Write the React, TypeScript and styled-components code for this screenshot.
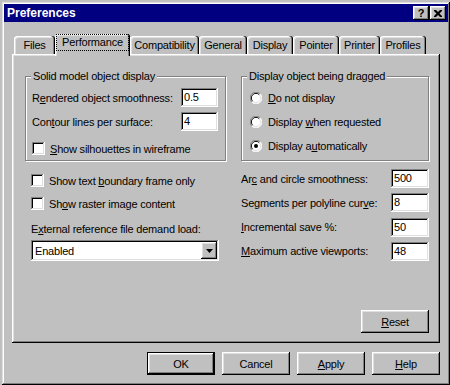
import styled, { createGlobalStyle } from 'styled-components'

const GlobalStyle = createGlobalStyle`
  html, body {
    margin: 0;
    padding: 0;
    background: #c0c0c0;
  }
  body {
    font-family: "Liberation Sans", Arial, sans-serif;
    font-size: 11px;
    letter-spacing: -0.2px;
    color: #000;
  }
  #root {
    padding: 2px 0 0 2px;
  }
`

const raised = `
  box-shadow: inset -1px -1px #000, inset 1px 1px #fff, inset -2px -2px #808080, inset 2px 2px #dfdfdf;
`
const sunken = `
  box-shadow: inset -1px -1px #fff, inset 1px 1px #808080, inset -2px -2px #dfdfdf, inset 2px 2px #000;
`

const tabs = [
  { label: 'Files', width: 41 },
  { label: 'Performance', width: 75, active: true },
  { label: 'Compatibility', width: 69 },
  { label: 'General', width: 48 },
  { label: 'Display', width: 46 },
  { label: 'Pointer', width: 46 },
  { label: 'Printer', width: 41 },
  { label: 'Profiles', width: 46 }
]

function Radio({ checked }: { checked?: boolean }) {
  return (
    <svg width='12' height='12' viewBox='0 0 12 12'>
      <circle cx='6' cy='6' r='5.5' fill='#fff' />
      <path d='M10.2 1.8 A5.9 5.9 0 0 0 1.8 10.2' stroke='#808080' fill='none' />
      <path d='M1.8 10.2 A5.9 5.9 0 0 0 10.2 1.8' stroke='#fff' fill='none' />
      <path d='M9.3 2.7 A4.6 4.6 0 0 0 2.7 9.3' stroke='#000' fill='none' />
      <path d='M2.7 9.3 A4.6 4.6 0 0 0 9.3 2.7' stroke='#dfdfdf' fill='none' />
      {checked && <circle cx='6' cy='6' r='2' fill='#000' />}
    </svg>
  )
}

function App() {
  return (
    <>
      <GlobalStyle />
      <Window>
        <TitleBar>
          <Title>Preferences</Title>
          <TitleButton style={{ marginRight: 1 }}>?</TitleButton>
          <TitleButton>
            <svg width='8' height='7' viewBox='0 0 8 7'>
              <path d='M0 0h2l2 2 2-2h2v1l-2.5 2.5L8 6v1H6L4 5 2 7H0V6l2.5-2.5L0 1z' fill='#000' />
            </svg>
          </TitleButton>
        </TitleBar>

        <Body>
          <TabRow>
            {tabs.map(t => (
              <Tab key={t.label} $w={t.width} $active={t.active}>
                {t.active ? <Focus>{t.label}</Focus> : t.label}
              </Tab>
            ))}
          </TabRow>

          <Panel>
            <TopGrid>
              <Group>
                <Legend>Solid model object display</Legend>
                <GroupInner $pad='5px 7px 4px 6px'>
                  <FieldRow>
                    <span>
                      R<Key>e</Key>ndered object smoothness:
                    </span>
                    <TextBox $w={37}>0.5</TextBox>
                  </FieldRow>
                  <FieldRow>
                    <span>
                      Con<Key>t</Key>our lines per surface:
                    </span>
                    <TextBox $w={37}>4</TextBox>
                  </FieldRow>
                  <CheckRow $mt={6}>
                    <CheckBox />
                    <span>
                      <Key>S</Key>how silhouettes in wireframe
                    </span>
                  </CheckRow>
                </GroupInner>
              </Group>

              <Group>
                <Legend>Display object being dragged</Legend>
                <GroupInner $pad='7px 8px 3px 8px'>
                  <RadioRow>
                    <Radio />
                    <span>
                      <Key>D</Key>o not display
                    </span>
                  </RadioRow>
                  <RadioRow>
                    <Radio />
                    <span>
                      Display <Key>w</Key>hen requested
                    </span>
                  </RadioRow>
                  <RadioRow>
                    <Radio checked />
                    <span>
                      Display a<Key>u</Key>tomatically
                    </span>
                  </RadioRow>
                </GroupInner>
              </Group>
            </TopGrid>

            <LowerGrid>
              <LeftColumn>
                <CheckRow>
                  <CheckBox />
                  <span>
                    Show text <Key>b</Key>oundary frame only
                  </span>
                </CheckRow>
                <CheckRow $mt={10}>
                  <CheckBox />
                  <span>
                    Sh<Key>o</Key>w raster image content
                  </span>
                </CheckRow>
                <Caption>
                  E<Key>x</Key>ternal reference file demand load:
                </Caption>
                <Combo>
                  <span>Enabled</span>
                  <ComboButton>
                    <svg width='7' height='4' viewBox='0 0 7 4'>
                      <path d='M0 0h7L3.5 4z' fill='#000' />
                    </svg>
                  </ComboButton>
                </Combo>
              </LeftColumn>

              <RightColumn>
                <FieldRow>
                  <span>
                    Ar<Key>c</Key> and circle smoothness:
                  </span>
                  <TextBox $w={38}>500</TextBox>
                </FieldRow>
                <FieldRow>
                  <span>
                    Segments per polyline cur<Key>v</Key>e:
                  </span>
                  <TextBox $w={38}>8</TextBox>
                </FieldRow>
                <FieldRow>
                  <span>
                    <Key>I</Key>ncremental save %:
                  </span>
                  <TextBox $w={38}>50</TextBox>
                </FieldRow>
                <FieldRow>
                  <span>
                    <Key>M</Key>aximum active viewports:
                  </span>
                  <TextBox $w={38}>48</TextBox>
                </FieldRow>
              </RightColumn>
            </LowerGrid>

            <ResetRow>
              <Button>
                <Key>R</Key>eset
              </Button>
            </ResetRow>
          </Panel>

          <ButtonRow>
            <Button $default>OK</Button>
            <Button>Cancel</Button>
            <Button>
              <Key>A</Key>pply
            </Button>
            <Button>
              <Key>H</Key>elp
            </Button>
          </ButtonRow>
        </Body>
      </Window>
    </>
  )
}

const Window = styled.div`
  width: 448px;
  height: 383px;
  box-sizing: border-box;
  padding: 2px;
  display: flex;
  flex-direction: column;
  background: #c0c0c0;
  box-shadow: inset -1px -1px #000, inset 1px 1px #dfdfdf, inset -2px -2px #808080, inset 2px 2px #fff;
`

const TitleBar = styled.div`
  height: 18px;
  display: flex;
  align-items: center;
  padding: 0 2px 0 3px;
  background: #000080;
  color: #fff;
`

const Title = styled.div`
  flex: 1;
  font-weight: bold;
  font-size: 12px;
  letter-spacing: 0;
`

const TitleButton = styled.div`
  width: 16px;
  height: 14px;
  box-sizing: border-box;
  display: flex;
  align-items: center;
  justify-content: center;
  background: #c0c0c0;
  color: #000;
  font-weight: bold;
  font-size: 11px;
  line-height: 14px;
  ${raised}
`

const Body = styled.div`
  flex: 1;
  display: flex;
  flex-direction: column;
  padding: 12px 8px 0;
`

const TabRow = styled.div`
  display: flex;
  align-items: flex-end;
  height: 20px;
  padding-left: 2px;
`

const Tab = styled.div<{ $w: number; $active?: boolean }>`
  position: relative;
  z-index: 1;
  width: ${p => p.$w}px;
  height: ${p => (p.$active ? 22 : 18)}px;
  margin-bottom: ${p => (p.$active ? -2 : 0)}px;
  box-sizing: border-box;
  display: flex;
  justify-content: center;
  padding-top: ${p => (p.$active ? 2 : 3)}px;
  background: #c0c0c0;
  border-radius: 3px 3px 0 0;
  box-shadow: inset -1px 0 #000, inset -2px 0 #808080, inset 1px 1px #fff, inset 2px 2px #dfdfdf;
`

const Focus = styled.span`
  outline: 1px dotted #000;
  outline-offset: 1px;
  padding: 0 4px;
  height: 13px;
  line-height: 13px;
`

const Panel = styled.div`
  height: 289px;
  box-sizing: border-box;
  display: flex;
  flex-direction: column;
  padding: 16px 11px 10px 13px;
  ${raised}
`

const TopGrid = styled.div`
  display: grid;
  grid-template-columns: 201px 188px;
  column-gap: 15px;
`

const Group = styled.fieldset`
  margin: 0;
  padding: 0;
  min-width: 0;
  border: 1px solid #808080;
  box-shadow: inset 1px 1px #fff, 1px 1px #fff;
`

const Legend = styled.legend`
  margin-left: 5px;
  padding: 0 2px;
  line-height: 13px;
  background: #c0c0c0;
`

const GroupInner = styled.div<{ $pad: string }>`
  display: flex;
  flex-direction: column;
  gap: 5px;
  padding: ${p => p.$pad};
`

const FieldRow = styled.div`
  height: 19px;
  display: flex;
  align-items: center;
  justify-content: space-between;
`

const TextBox = styled.div<{ $w: number }>`
  width: ${p => p.$w}px;
  height: 19px;
  box-sizing: border-box;
  padding: 0 3px;
  line-height: 19px;
  background: #fff;
  ${sunken}
`

const CheckRow = styled.div<{ $mt?: number }>`
  display: flex;
  align-items: center;
  gap: 5px;
  height: 13px;
  margin-top: ${p => p.$mt ?? 0}px;
`

const CheckBox = styled.div`
  width: 13px;
  height: 13px;
  box-sizing: border-box;
  background: #fff;
  ${sunken}
`

const RadioRow = styled.div`
  display: flex;
  align-items: center;
  gap: 6px;
  height: 16px;
  margin-bottom: 3px;

  svg {
    flex: none;
  }
`

const LowerGrid = styled.div`
  display: grid;
  grid-template-columns: 201px 188px;
  column-gap: 15px;
  margin-top: 8px;
`

const LeftColumn = styled.div`
  display: flex;
  flex-direction: column;
  padding: 5px 7px 0 6px;
`

const RightColumn = styled.div`
  display: flex;
  flex-direction: column;
  gap: 5.3px;
`

const Caption = styled.div`
  margin-top: 13px;
  line-height: 13px;
`

const Combo = styled.div`
  margin-top: 4px;
  height: 21px;
  box-sizing: border-box;
  display: flex;
  align-items: center;
  justify-content: space-between;
  padding: 2px 2px 2px 4px;
  background: #fff;
  ${sunken}
`

const ComboButton = styled.div`
  width: 16px;
  height: 17px;
  box-sizing: border-box;
  display: flex;
  align-items: center;
  justify-content: center;
  background: #c0c0c0;
  ${raised}
`

const ResetRow = styled.div`
  margin-top: auto;
  display: flex;
  justify-content: flex-end;
`

const ButtonRow = styled.div`
  display: flex;
  justify-content: flex-end;
  gap: 7px;
  margin-top: 9px;
`

const Button = styled.div<{ $default?: boolean }>`
  width: 68px;
  height: 23px;
  box-sizing: border-box;
  display: flex;
  align-items: center;
  justify-content: center;
  background: #c0c0c0;
  ${p =>
    p.$default
      ? 'box-shadow: inset 0 0 0 1px #000, inset -2px -2px #000, inset 2px 2px #fff, inset -3px -3px #808080, inset 3px 3px #dfdfdf;'
      : raised}
`

const Key = styled.u`
  text-decoration-thickness: 1px;
  text-underline-offset: 1px;
`

export default App
